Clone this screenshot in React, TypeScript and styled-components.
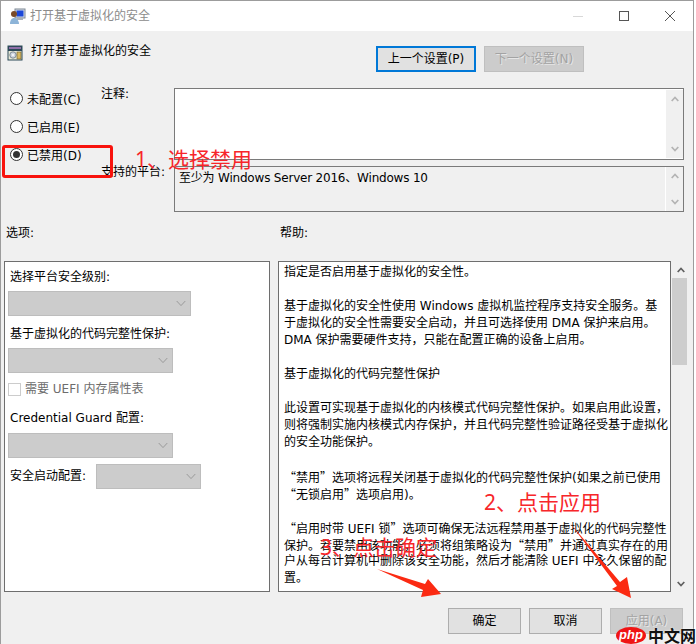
import React from 'react';
import styled, { createGlobalStyle } from 'styled-components';

const GlobalStyle = createGlobalStyle`
    html, body {
        margin: 0;
        padding: 0;
        background: #fff;
        overflow: hidden;
    }
    * {
        box-sizing: border-box;
    }
`;

const CJK = `"Noto Sans CJK SC", sans-serif`;
const FONT = `"DejaVu Sans", ${CJK}`;

const Window = styled.div`
    position: relative;
    width: 694px;
    height: 644px;
    display: flex;
    flex-direction: column;
    background: #f0f0f0;
    border: 1px solid #9c9c9c;
    border-bottom: 0;
    font-family: ${FONT};
    font-size: 12px;
    color: #000;
`;

const TitleBar = styled.div`
    flex: none;
    height: 30px;
    display: flex;
    align-items: center;
    padding-left: 8px;
    background: #fff;
`;

const TitleText = styled.span`
    margin-left: 4px;
    flex: 1;
    color: #8c8c8c;
    line-height: 16px;
`;

const WinControl = styled.div`
    width: 46px;
    height: 30px;
    display: flex;
    align-items: center;
    justify-content: center;
`;

const HeaderRow = styled.div`
    flex: none;
    height: 57px;
    display: flex;
    justify-content: space-between;
    padding: 14px 109px 0 6px;
`;

const HeaderTitle = styled.div`
    display: flex;
    gap: 8px;
    line-height: 12px;
`;

const NavButtons = styled.div`
    display: flex;
    gap: 8px;
    margin-top: 1px;
`;

const Button = styled.div<{ $focus?: boolean; $disabled?: boolean; $w: number }>`
    width: ${(p) => p.$w}px;
    height: 26px;
    display: flex;
    align-items: center;
    justify-content: center;
    background: ${(p) => (p.$disabled ? '#cccccc' : '#e1e1e1')};
    border: ${(p) => (p.$focus ? '2px solid #0078d7' : p.$disabled ? '1px solid #bfbfbf' : '1px solid #adadad')};
    color: ${(p) => (p.$disabled ? '#a3a3a3' : '#000')};
    text-shadow: ${(p) => (p.$disabled ? '1px 1px 0 #e6e6e6' : 'none')};
    line-height: 16px;
`;

const SettingsGrid = styled.div`
    flex: none;
    display: grid;
    grid-template-columns: 100px 73px 510px;
    grid-template-rows: 72px 46px;
    row-gap: 6px;
`;

const RadioColumn = styled.div`
    grid-row: 1 / span 2;
    display: flex;
    flex-direction: column;
    gap: 8px;
    padding-left: 9px;
`;

const RadioRow = styled.div`
    height: 20px;
    display: flex;
    align-items: center;
    gap: 4px;
`;

const RadioCircle = styled.div<{ $on?: boolean }>`
    width: 13px;
    height: 13px;
    flex: none;
    border-radius: 50%;
    border: 1px solid #333;
    background: #fff;
    display: flex;
    align-items: center;
    justify-content: center;
    &::after {
        content: '';
        display: ${(p) => (p.$on ? 'block' : 'none')};
        width: 7px;
        height: 7px;
        border-radius: 50%;
        background: #333;
    }
`;

const FieldLabel = styled.div`
    line-height: 12px;
`;

const TextBox = styled.div<{ $readonly?: boolean }>`
    display: flex;
    justify-content: space-between;
    border: 1px solid #7a7a7a;
    background: ${(p) => (p.$readonly ? '#f0f0f0' : '#fff')};
    line-height: 16px;
    padding: ${(p) => (p.$readonly ? '3px 0 0 4px' : '0')};
`;

const PlatformText = styled.span`
    letter-spacing: -0.2px;
`;

const BoxScroll = styled.div<{ $flush?: boolean }>`
    width: 18px;
    margin: ${(p) => (p.$flush ? '-3px 0 0' : '1px 0')};
    flex: none;
    display: flex;
    flex-direction: column;
    justify-content: space-between;
    align-items: center;
    padding: 6px 0;
    background: #f0f0f0;
    border-left: 1px solid #fff;
`;

const SectionLabels = styled.div`
    flex: none;
    height: 49px;
    display: grid;
    grid-template-columns: 274px 1fr;
    padding: 13px 0 0 5px;
    line-height: 16px;
`;

const Panels = styled.div`
    flex: none;
    height: 331px;
    display: flex;
    padding-left: 3px;
`;

const OptionsPanel = styled.div`
    width: 266px;
    border: 1px solid #6e6e6e;
    background: #fff;
    display: flex;
    flex-direction: column;
    align-items: flex-start;
    padding: 7px 0 0 3px;
`;

const OptionLabel = styled.div<{ $mt?: number }>`
    margin: ${(p) => p.$mt || 0}px 0 0 2px;
    line-height: 16px;
`;

const Select = styled.div<{ $w: number; $mt?: number }>`
    width: ${(p) => p.$w}px;
    height: 25px;
    margin-top: ${(p) => p.$mt || 0}px;
    flex: none;
    display: flex;
    align-items: center;
    justify-content: flex-end;
    padding-right: 4px;
    background: #cccccc;
    border: 1px solid #bdbdbd;
`;

const CheckRow = styled.div`
    margin-top: 10px;
    height: 13px;
    display: flex;
    align-items: center;
    gap: 4px;
    color: #6d6d6d;
    line-height: 13px;
`;

const CheckBox = styled.div`
    width: 13px;
    height: 13px;
    background: #fff;
    border: 1px solid #cccccc;
`;

const InlineRow = styled.div`
    margin-top: 6px;
    display: flex;
    align-items: center;
    gap: 10px;
`;

const InlineLabel = styled.span`
    width: 76px;
    margin-left: 2px;
    padding-bottom: 2px;
    line-height: 16px;
    white-space: nowrap;
`;

const HelpPanel = styled.div`
    width: 393px;
    margin-left: 8px;
    border: 1px solid #6e6e6e;
    background: #fff;
    padding: 2px 0 0 5px;
    overflow: hidden;
`;

const HelpLine = styled.div`
    height: 17px;
    line-height: 17px;
    white-space: pre;
`;

const Quote = styled.span`
    font-family: ${CJK};
`;

const HelpScroll = styled.div`
    width: 18px;
    margin-left: 1px;
    display: flex;
    flex-direction: column;
    align-items: stretch;
`;

const ScrollArrow = styled.div<{ $bottom?: boolean }>`
    height: 17px;
    flex: none;
    display: flex;
    align-items: center;
    justify-content: center;
    margin-top: ${(p) => (p.$bottom ? 'auto' : '0')};
`;

const ScrollThumb = styled.div`
    height: 87px;
    width: 15px;
    background: #cdcdcd;
`;

const Footer = styled.div`
    flex: 1;
    display: flex;
    justify-content: flex-end;
    gap: 8px;
    padding: 16px 10px 0 0;
`;

const RedBox = styled.div`
    position: absolute;
    left: 1px;
    top: 144px;
    width: 111px;
    height: 33px;
    border: 3px solid #f8130d;
    border-radius: 3px;
`;

const Note = styled.span<{ $x: number; $y: number }>`
    position: absolute;
    left: ${(p) => p.$x}px;
    top: ${(p) => p.$y}px;
    font-family: "Noto Sans", ${CJK};
    font-size: 21px;
    line-height: 26px;
    color: #f7262a;
    white-space: pre;
`;

const ArrowLayer = styled.svg`
    position: absolute;
    left: -1px;
    top: -1px;
    pointer-events: none;
`;

const Watermark = styled.div`
    position: absolute;
    left: 615px;
    top: 626px;
    height: 17px;
    display: flex;
    align-items: center;
    gap: 2px;
    white-space: nowrap;
`;

const PhpBadge = styled.span`
    width: 30px;
    height: 17px;
    flex: none;
    border-radius: 50%;
    background: #f01414;
    color: #fff;
    font: italic 700 13px/16px 'Liberation Sans', sans-serif;
    text-align: center;
`;

const WatermarkText = styled.span`
    font-family: ${CJK};
    font-size: 16px;
    font-weight: 700;
    line-height: 17px;
    color: #111;
    text-shadow: 0 0 2px #fff;
`;

const Chevron: React.FC<{ up?: boolean; color?: string; w?: number; thin?: boolean }> = ({
    up,
    color = '#a6a6a6',
    w = 8,
    thin,
}) => (
    <svg width={w} height={w / 2 + 2} viewBox={`0 0 ${w} ${w / 2 + 2}`} fill="none">
        <polyline
            points={
                up
                    ? `0.7,${w / 2 + 1} ${w / 2},1.4 ${w - 0.7},${w / 2 + 1}`
                    : `0.7,1 ${w / 2},${w / 2 + 0.6} ${w - 0.7},1`
            }
            stroke={color}
            strokeWidth={thin ? 1 : 1.7}
        />
    </svg>
);

const UserMonitorIcon = () => (
    <svg width="17" height="17" viewBox="0 0 17 17">
        <rect x="6" y="1" width="10" height="9" fill="#d6dde8" stroke="#7d8794" />
        <rect x="7.5" y="2.5" width="7" height="6" fill="#1b47d8" />
        <rect x="8" y="10" width="6" height="2" fill="#a9b0ba" />
        <circle cx="5" cy="6" r="3" fill="#7a4a28" />
        <path d="M1 16c0-4 2-6 4-6s5 2 5 6z" fill="#8db4d8" />
    </svg>
);

const PolicyIcon = () => (
    <svg width="16" height="16" viewBox="0 0 16 16">
        <rect x="0.5" y="0.5" width="15" height="15" fill="#2d4a58" />
        <rect x="2" y="2" width="12" height="2" fill="#8f6fa8" />
        <rect x="1.5" y="6" width="13" height="8.5" fill="#e8ead8" />
        <circle cx="6" cy="10" r="3.2" fill="#cfd6e0" stroke="#7d8a94" />
        <circle cx="6" cy="10" r="0.9" fill="#fff" />
        <rect x="10" y="7" width="4" height="7" fill="#d8b860" stroke="#6d5a28" strokeWidth="0.6" />
    </svg>
);

const helpLines = [
    '指定是否启用基于虚拟化的安全性。',
    '',
    '基于虚拟化的安全性使用 Windows 虚拟机监控程序支持安全服务。基',
    '于虚拟化的安全性需要安全启动，并且可选择使用 DMA 保护来启用。',
    'DMA 保护需要硬件支持，只能在配置正确的设备上启用。',
    '',
    '基于虚拟化的代码完整性保护',
    '',
    '此设置可实现基于虚拟化的内核模式代码完整性保护。如果启用此设置，',
    '则将强制实施内核模式内存保护，并且代码完整性验证路径受基于虚拟化',
    '的安全功能保护。',
    '',
    '“禁用”选项将远程关闭基于虚拟化的代码完整性保护(如果之前已使用',
    '“无锁启用”选项启用)。',
    '',
    '“启用时带 UEFI 锁”选项可确保无法远程禁用基于虚拟化的代码完整性',
    '保护。若要禁用该功能，必须将组策略设为“禁用”并通过真实存在的用',
    '户从每台计算机中删除该安全功能，然后才能清除 UEFI 中永久保留的配',
    '置。',
];

// the curly quotes have to come from the CJK face to stay full width
const withQuotes = (line: string) =>
    line.split(/([“”])/).map((part, i) => (part === '“' || part === '”' ? <Quote key={i}>{part}</Quote> : part));

export default function App() {
    return (
        <>
            <GlobalStyle />
            <Window lang="zh-CN">
                <TitleBar>
                    <UserMonitorIcon />
                    <TitleText>打开基于虚拟化的安全</TitleText>
                    <WinControl>
                        <svg width="10" height="10">
                            <line x1="0" y1="5.5" x2="10" y2="5.5" stroke="#d8d8d8" />
                        </svg>
                    </WinControl>
                    <WinControl>
                        <svg width="10" height="10">
                            <rect x="0.5" y="0.5" width="9" height="9" fill="none" stroke="#555" />
                        </svg>
                    </WinControl>
                    <WinControl>
                        <svg width="10" height="10">
                            <path d="M0 0L10 10M10 0L0 10" stroke="#555" />
                        </svg>
                    </WinControl>
                </TitleBar>

                <HeaderRow>
                    <HeaderTitle>
                        <PolicyIcon />
                        <span>打开基于虚拟化的安全</span>
                    </HeaderTitle>
                    <NavButtons>
                        <Button $w={100} $focus>
                            上一个设置(P)
                        </Button>
                        <Button $w={100} $disabled>
                            下一个设置(N)
                        </Button>
                    </NavButtons>
                </HeaderRow>

                <SettingsGrid>
                    <RadioColumn>
                        <RadioRow>
                            <RadioCircle />
                            未配置(C)
                        </RadioRow>
                        <RadioRow>
                            <RadioCircle />
                            已启用(E)
                        </RadioRow>
                        <RadioRow>
                            <RadioCircle $on />
                            已禁用(D)
                        </RadioRow>
                    </RadioColumn>
                    <FieldLabel>注释:</FieldLabel>
                    <TextBox>
                        <span />
                        <BoxScroll>
                            <Chevron up color="#b4b4b4" />
                            <Chevron color="#b4b4b4" />
                        </BoxScroll>
                    </TextBox>
                    <FieldLabel>支持的平台:</FieldLabel>
                    <TextBox $readonly>
                        <PlatformText>至少为 Windows Server 2016、Windows 10</PlatformText>
                        <BoxScroll $flush>
                            <Chevron up color="#b4b4b4" />
                            <Chevron color="#b4b4b4" />
                        </BoxScroll>
                    </TextBox>
                </SettingsGrid>

                <SectionLabels>
                    <span>选项:</span>
                    <span>帮助:</span>
                </SectionLabels>

                <Panels>
                    <OptionsPanel>
                        <OptionLabel>选择平台安全级别:</OptionLabel>
                        <Select $w={183} $mt={6}>
                            <Chevron color="#9a9a9a" w={10} thin />
                        </Select>
                        <OptionLabel $mt={10}>基于虚拟化的代码完整性保护:</OptionLabel>
                        <Select $w={165} $mt={6}>
                            <Chevron color="#9a9a9a" w={10} thin />
                        </Select>
                        <CheckRow>
                            <CheckBox />
                            需要 UEFI 内存属性表
                        </CheckRow>
                        <OptionLabel $mt={14}>Credential Guard 配置:</OptionLabel>
                        <Select $w={165} $mt={7}>
                            <Chevron color="#9a9a9a" w={10} thin />
                        </Select>
                        <InlineRow>
                            <InlineLabel>安全启动配置:</InlineLabel>
                            <Select $w={105}>
                                <Chevron color="#9a9a9a" w={10} thin />
                            </Select>
                        </InlineRow>
                    </OptionsPanel>
                    <HelpPanel>
                        {helpLines.map((line, i) => (
                            <HelpLine key={i}>{withQuotes(line)}</HelpLine>
                        ))}
                    </HelpPanel>
                    <HelpScroll>
                        <ScrollArrow>
                            <Chevron up color="#606060" />
                        </ScrollArrow>
                        <ScrollThumb />
                        <ScrollArrow $bottom>
                            <Chevron color="#606060" />
                        </ScrollArrow>
                    </HelpScroll>
                </Panels>

                <Footer>
                    <Button $w={73}>确定</Button>
                    <Button $w={73}>取消</Button>
                    <Button $w={73} $disabled>
                        应用(A)
                    </Button>
                </Footer>

                <RedBox />
                <Note $x={134} $y={145}>1、选择禁用</Note>
                <Note $x={483} $y={488}>2、点击应用</Note>
                <Note $x={319} $y={533}>3、点击确定</Note>
                <ArrowLayer width="696" height="644">
                    <polygon points="377,569 425,584 428,579 441,594 421,597 423,590" fill="#fb2a12" />
                    <polygon points="570,523 620,582 627,577 631,598 612,589 617,586" fill="#fb2a12" />
                </ArrowLayer>
                <Watermark>
                    <PhpBadge>php</PhpBadge>
                    <WatermarkText>中文网</WatermarkText>
                </Watermark>
            </Window>
        </>
    );
}
